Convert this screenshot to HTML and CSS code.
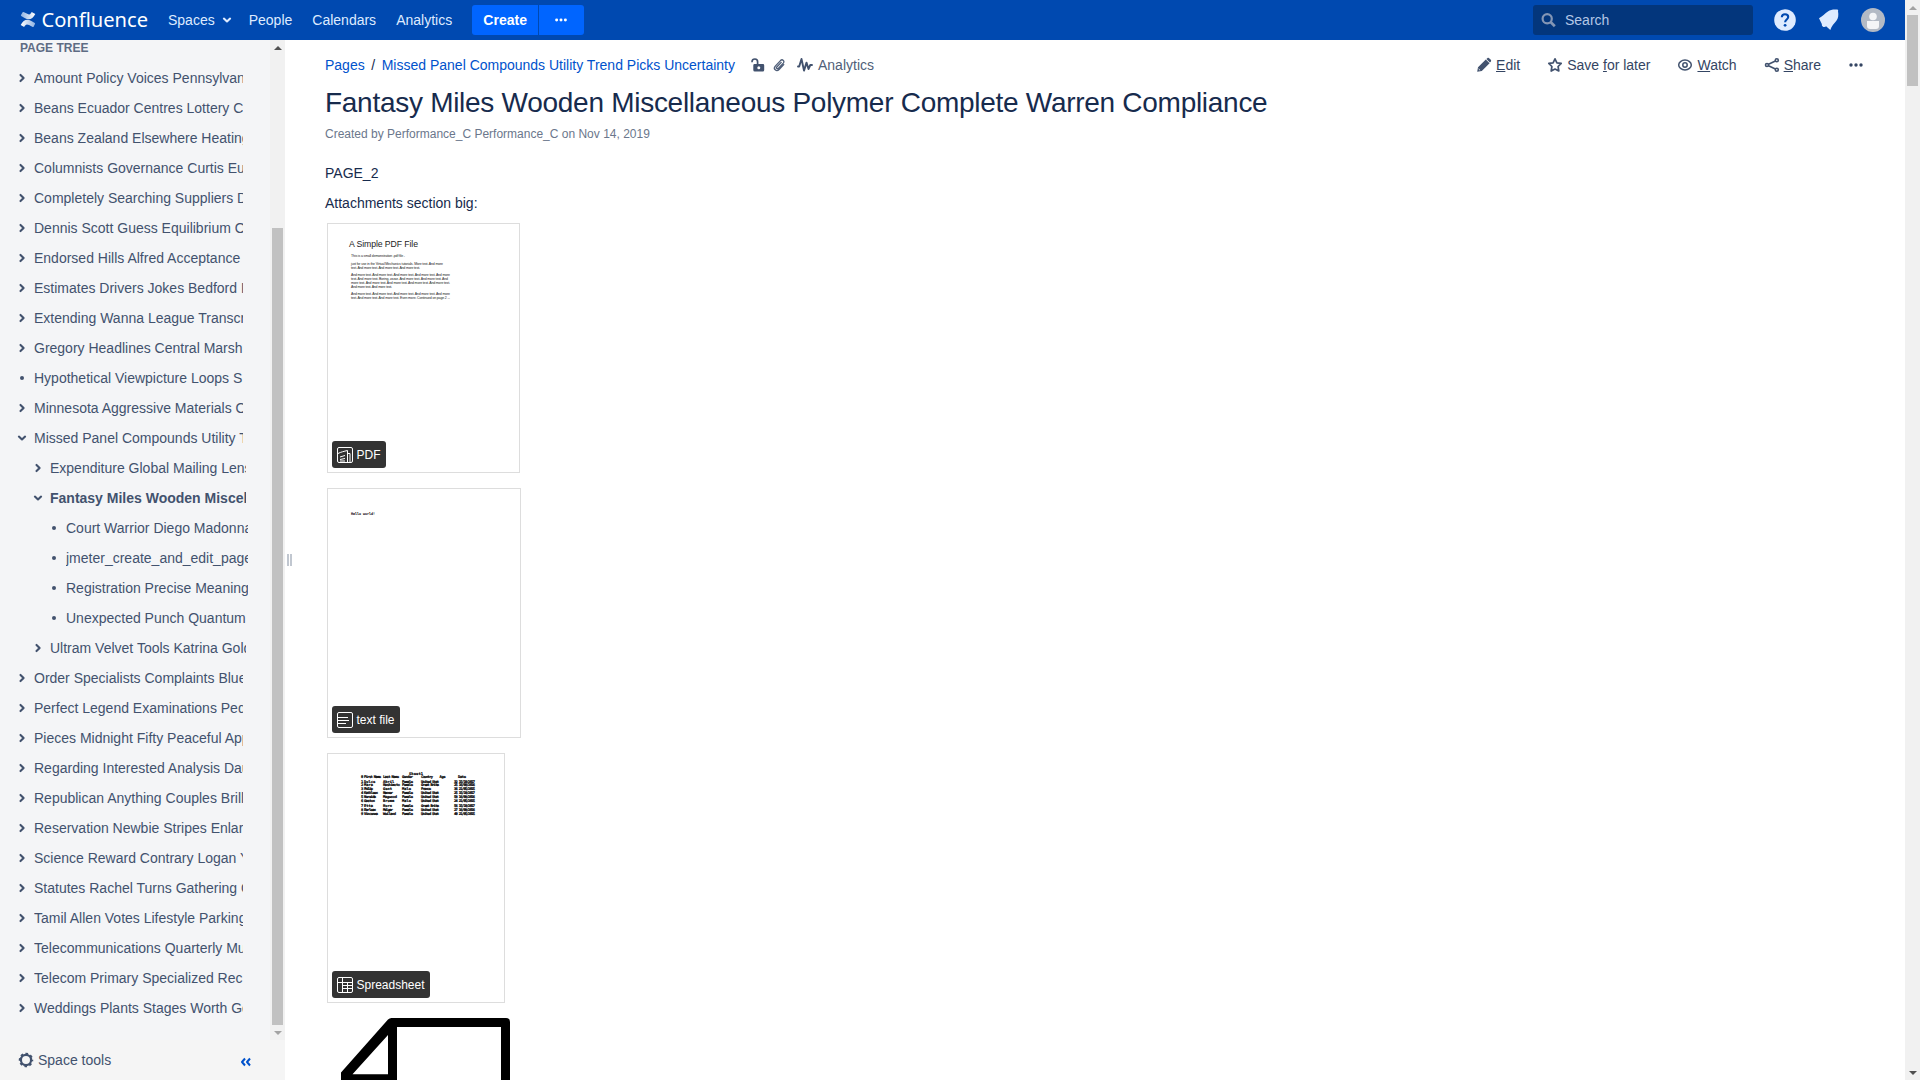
FILE: index.html
```html
<!DOCTYPE html>
<html lang="en">
<head>
<meta charset="utf-8">
<title>Fantasy Miles Wooden Miscellaneous Polymer Complete Warren Compliance - Confluence</title>
<link rel="stylesheet" href="styles.css">
</head>
<body>
<svg class="defs" width="0" height="0" aria-hidden="true">
  <defs>
    <symbol id="right" viewBox="0 0 16 16"><path d="M6.500 4.900 9.600 8 6.500 11.100" fill="none" stroke="currentColor" stroke-width="2.100" stroke-linecap="round" stroke-linejoin="round"/></symbol>
    <symbol id="down" viewBox="0 0 16 16"><path d="M4.900 6.600 8 9.500l3.100-2.900" fill="none" stroke="currentColor" stroke-width="2.100" stroke-linecap="round" stroke-linejoin="round"/></symbol>
    <symbol id="dot" viewBox="0 0 16 16"><circle cx="8" cy="8" r="2" fill="currentColor"/></symbol>
    <symbol id="more" viewBox="0 0 16 16"><g fill="currentColor"><circle cx="3" cy="8" r="1.700"/><circle cx="8" cy="8" r="1.700"/><circle cx="13" cy="8" r="1.700"/></g></symbol>
    <linearGradient id="fadeA" x1="0" y1="0" x2="1" y2="0"><stop offset="0" stop-color="#fff"/><stop offset="1" stop-color="#8fb2e2"/></linearGradient>
    <linearGradient id="fadeB" x1="1" y1="0" x2="0" y2="0"><stop offset="0" stop-color="#fff"/><stop offset="1" stop-color="#8fb2e2"/></linearGradient>
  </defs>
</svg>
<div class="app">
  <div class="frame">
    <header class="header">
      <svg class="logo" width="130" height="40" viewBox="0 0 130 40">
        <path d="M2.600 12.300 1 15c-.2.400-.1.700.2.900l3.400 2c4.600 2.700 8 1 10.700-4l-3.600-1.900c-1.400 2.500-2.200 3-4.500 1.700l-3.700-1.600z" fill="url(#fadeB)"/>
        <path d="M13.600 26.700 15 24c.2-.4.1-.7-.2-.9l-3.400-2C6.800 18.400 3.400 20.100.7 25.100l3.400 1.900c1.400-2.600 2.600-3.200 5-1.900l3.600 1.800c.3.200.700.100.900-.2z" fill="url(#fadeA)"/>
        <text class="logo-text" x="21.500" y="26.600" textLength="106.500" lengthAdjust="spacingAndGlyphs">Confluence</text>
      </svg>
      <nav class="nav">
        <a>Spaces<svg class="nav-caret" width="16" height="16"><use href="#down"/></svg></a>
        <a>People</a><a>Calendars</a><a>Analytics</a>
      </nav>
      <div class="create"><button class="btn btn-create">Create</button><button class="btn btn-more"><svg width="14" height="14"><use href="#more"/></svg></button></div>
      <div class="tools">
        <div class="search"><svg width="16" height="16" viewBox="0 0 16 16"><circle cx="6.200" cy="6.700" r="4.600" fill="none" stroke="#8496b5" stroke-width="2.200"/><path d="m9.800 10.300 4 3.900" stroke="#8496b5" stroke-width="2.700"/></svg>Search</div>
        <svg width="24" height="24" viewBox="0 0 24 24"><circle cx="12" cy="12" r="10.800" fill="#deebff"/><path d="M8.800 9.300C8.900 7.400 10.100 6.300 12 6.300s3.200 1.100 3.200 2.700c0 2.300-3.100 2.600-3.100 5.200" fill="none" stroke="#0049b0" stroke-width="2.100"/><circle cx="12.100" cy="17.300" r="1.400" fill="#0049b0"/></svg>
        <svg width="24" height="24" viewBox="0 0 24 24"><path d="M2 10.200C5 8.400 8.300 5.300 10.900 3.400c2.700-1.900 5.900-2 8.800-1.800.8-.7 2 .5 1.300 1.300.7 4.100.4 7.200-1.600 9.900-2 2.700-4.900 5.100-6.100 9.200L9.100 18.300c-1.400 1.600-4.600.7-4.300-2.400zM6.300 16.300l1.700 1.600" fill="#deebff"/></svg>
        <svg width="24" height="24" viewBox="0 0 24 24"><circle cx="12" cy="12" r="12" fill="#b3bac5"/><circle cx="12" cy="8.500" r="3.800" fill="#f4f5f7"/><path d="M6 13h12v5a3 3 0 0 1-3 3H9a3 3 0 0 1-3-3z" fill="#f4f5f7"/></svg>
      </div>
    </header>
    <div class="body">
      <aside class="sidebar">
        <div class="side-scroll">
          <div class="tree">
            <h5>PAGE TREE</h5>
            <ul>
              <li><svg><use href="#right"/></svg><span>Amount Policy Voices Pennsylvania</span></li>
              <li><svg><use href="#right"/></svg><span>Beans Ecuador Centres Lottery Com</span></li>
              <li><svg><use href="#right"/></svg><span>Beans Zealand Elsewhere Heating</span></li>
              <li><svg><use href="#right"/></svg><span>Columnists Governance Curtis Euro</span></li>
              <li><svg><use href="#right"/></svg><span>Completely Searching Suppliers Dog</span></li>
              <li><svg><use href="#right"/></svg><span>Dennis Scott Guess Equilibrium Over</span></li>
              <li><svg><use href="#right"/></svg><span>Endorsed Hills Alfred Acceptance</span></li>
              <li><svg><use href="#right"/></svg><span>Estimates Drivers Jokes Bedford Port</span></li>
              <li><svg><use href="#right"/></svg><span>Extending Wanna League Transcript</span></li>
              <li><svg><use href="#right"/></svg><span>Gregory Headlines Central Marsh</span></li>
              <li><svg><use href="#dot"/></svg><span>Hypothetical Viewpicture Loops S</span></li>
              <li><svg><use href="#right"/></svg><span>Minnesota Aggressive Materials Over</span></li>
              <li><svg><use href="#down"/></svg><span>Missed Panel Compounds Utility Trend</span></li>
              <li class="l2"><svg><use href="#right"/></svg><span>Expenditure Global Mailing Lens</span></li>
              <li class="l2 current"><svg><use href="#down"/></svg><span>Fantasy Miles Wooden Miscellaneous</span></li>
              <li class="l3"><svg><use href="#dot"/></svg><span>Court Warrior Diego Madonna</span></li>
              <li class="l3"><svg><use href="#dot"/></svg><span>jmeter_create_and_edit_page</span></li>
              <li class="l3"><svg><use href="#dot"/></svg><span>Registration Precise Meaning</span></li>
              <li class="l3"><svg><use href="#dot"/></svg><span>Unexpected Punch Quantum</span></li>
              <li class="l2"><svg><use href="#right"/></svg><span>Ultram Velvet Tools Katrina Gold</span></li>
              <li><svg><use href="#right"/></svg><span>Order Specialists Complaints Blue</span></li>
              <li><svg><use href="#right"/></svg><span>Perfect Legend Examinations Pedro</span></li>
              <li><svg><use href="#right"/></svg><span>Pieces Midnight Fifty Peaceful Apps</span></li>
              <li><svg><use href="#right"/></svg><span>Regarding Interested Analysis Dau</span></li>
              <li><svg><use href="#right"/></svg><span>Republican Anything Couples Brill</span></li>
              <li><svg><use href="#right"/></svg><span>Reservation Newbie Stripes Enlarge</span></li>
              <li><svg><use href="#right"/></svg><span>Science Reward Contrary Logan Year</span></li>
              <li><svg><use href="#right"/></svg><span>Statutes Rachel Turns Gathering Old</span></li>
              <li><svg><use href="#right"/></svg><span>Tamil Allen Votes Lifestyle Parking</span></li>
              <li><svg><use href="#right"/></svg><span>Telecommunications Quarterly Music</span></li>
              <li><svg><use href="#right"/></svg><span>Telecom Primary Specialized Rec</span></li>
              <li><svg><use href="#right"/></svg><span>Weddings Plants Stages Worth Geo</span></li>
            </ul>
          </div>
          <div class="scrollbar side-bar"><i class="arrow up dark"></i><div class="thumb"></div><i class="arrow down"></i></div>
        </div>
        <div class="side-foot">
          <svg width="16" height="16" viewBox="0 0 16 16"><circle cx="8" cy="8" r="5.100" fill="none" stroke="#42526e" stroke-width="2.200"/><circle cx="8" cy="8" r="6.300" fill="none" stroke="#42526e" stroke-width="1.900" stroke-dasharray="2.600 2.350" stroke-dashoffset="1.300"/></svg>
          <span>Space tools</span>
          <svg class="collapse" width="12" height="12" viewBox="0 0 12 12"><path d="M5 2.500 2 6l3 3.500M10 2.500 7 6l3 3.500" fill="none" stroke="#0052cc" stroke-width="2" stroke-linejoin="round"/></svg>
        </div>
      </aside>
      <div class="splitter"><i></i><i></i></div>
      <main class="content">
        <div class="topline">
          <div class="crumbs">
            <a>Pages</a><span class="slash">/</span><a>Missed Panel Compounds Utility Trend Picks Uncertainty</a>
            <svg class="lock" width="16" height="16" viewBox="0 0 16 16"><path d="M2 5.200C2 2.700 3.200 2 4.900 2s2.700 1 2.700 2.800V8" fill="none" stroke="#42526e" stroke-width="1.700"/><path fill-rule="evenodd" d="M4.500 7H13a1.200 1.200 0 0 1 1.200 1.200V13A1.500 1.500 0 0 1 12.700 14.500H4.800A1.500 1.500 0 0 1 3.300 13V8.200A1.200 1.200 0 0 1 4.500 7zm4.300 2.300a1.500 1.500 0 1 0 0 3 1.500 1.500 0 0 0 0-3z" fill="#42526e"/></svg>
            <svg class="clip" width="16" height="16" viewBox="0 0 16 16"><path d="m12.700 7.600-4.600 4.900c-2.700 2.700-6.300-.6-3.800-3.400l5.200-5.500c1.900-1.900 4.600.5 2.800 2.500l-5 5.300c-1.100 1-2.500-.2-1.500-1.400l4.400-4.600" fill="none" stroke="#505f79" stroke-width="1.350" stroke-linecap="round"/></svg>
            <svg class="pulse" width="16" height="16" viewBox="0 0 16 16"><path d="M1 9.500h1.200L4.500 2 7 13.600l2.500-8 2 6.400 1.800-4H15" fill="none" stroke="#42526e" stroke-width="1.900" stroke-linecap="round" stroke-linejoin="round"/></svg>
            <span class="muted">Analytics</span>
          </div>
          <div class="actions">
            <a><svg width="16" height="16" viewBox="0 0 16 16"><path d="M1.200 14.800 2 10.200l7.800-7.600 3.800 3.700-7.800 7.700zM10.400 1.900l.9-.6c.8-.7 1.500-.5 2.100.1l1.200 1.100c.7.700.7 1.500.1 2.200l-.8.900z" fill="#42526e"/><path d="m2.600 11.900 1.500 1.400" stroke="#fff" stroke-width=".8"/></svg><span><u>E</u>dit</span></a>
            <a><svg width="16" height="16" viewBox="0 0 16 16"><path d="m8 1.800 1.900 4 4.300.6-3.100 3.100.7 4.500L8 12l-3.800 2 .7-4.500-3.100-3.100 4.300-.6z" fill="none" stroke="#42526e" stroke-width="1.700" stroke-linejoin="round"/></svg><span>Save <u>f</u>or later</span></a>
            <a><svg width="16" height="16" viewBox="0 0 16 16"><ellipse cx="8" cy="8" rx="6.300" ry="4.900" fill="none" stroke="#42526e" stroke-width="1.500"/><circle cx="8" cy="8" r="2.200" fill="none" stroke="#42526e" stroke-width="1.500"/></svg><span><u>W</u>atch</span></a>
            <a><svg width="16" height="16" viewBox="0 0 16 16"><g fill="none" stroke="#42526e" stroke-width="1.600"><circle cx="3" cy="8" r="1.500"/><circle cx="12.800" cy="3.300" r="1.500"/><circle cx="12.800" cy="12.700" r="1.500"/><path d="m4.500 7.300 6.900-3.200M4.500 8.700l6.900 3.200"/></g></svg><span><u>S</u>hare</span></a>
            <a><svg width="16" height="16"><use href="#more"/></svg></a>
          </div>
        </div>
        <h1>Fantasy Miles Wooden Miscellaneous Polymer Complete Warren Compliance</h1>
        <p class="meta">Created by Performance_C Performance_C on Nov 14, 2019</p>
        <p class="para">PAGE_2</p>
        <p class="para">Attachments section big:</p>
        <div class="files">
          <div class="file pdf">
            <svg class="preview" width="191" height="248" viewBox="328 224 191 248">
              <text x="349" y="246.800" font-size="8.700" textLength="69">A Simple PDF File</text>
              <g class="tiny" font-size="3.500">
                <text x="351" y="257.300" textLength="54">This is a small demonstration .pdf file -</text>
                <text x="351" y="264.600" textLength="92">just for use in the Virtual Mechanics tutorials. More text. And more</text>
                <text x="351" y="268.500" textLength="69">text. And more text. And more text. And more text.</text>
                <text x="351" y="276" textLength="99">And more text. And more text. And more text. And more text. And more</text>
                <text x="351" y="279.900" textLength="97">text. And more text. Boring, zzzzz. And more text. And more text. And</text>
                <text x="351" y="283.600" textLength="99">more text. And more text. And more text. And more text. And more text.</text>
                <text x="351" y="287.500" textLength="41">And more text. And more text.</text>
                <text x="351" y="294.900" textLength="99">And more text. And more text. And more text. And more text. And more</text>
                <text x="351" y="298.700" textLength="99">text. And more text. And more text. Even more. Continued on page 2 ...</text>
              </g>
            </svg>
            <div class="badge"><svg width="16" height="16" viewBox="0 0 16 16"><g fill="none" stroke="#fff" stroke-width="1"><rect x=".5" y=".5" width="15" height="15" rx="1.500"/><path d="M1 6.500c3-1.500 6-2.200 9.500-3v12M10.500 6.500H13v9M3 10l5-1.500M3 12.500l5-1M3 14h5"/></g></svg>PDF</div>
          </div>
          <div class="file txt">
            <svg class="preview" width="192" height="248" viewBox="328 489 192 248"><text class="mono" x="351" y="514.800" font-size="3.800" textLength="24" lengthAdjust="spacingAndGlyphs">Hello world!</text></svg>
            <div class="badge"><svg width="16" height="16" viewBox="0 0 16 16"><g fill="none" stroke="#fff" stroke-width="1"><rect x=".5" y=".5" width="15" height="15" rx="1.500"/><path d="M1 5.500h10M1 8.500h11M1 11.500h8"/></g></svg>text file</div>
          </div>
          <div class="file xls">
            <svg class="preview" width="176" height="248" viewBox="328 754 176 248">
              <g class="mono sheet" font-size="3.700">
                <text x="409" y="774.700" textLength="14">Sheet1</text>
                <text y="778.400"><tspan x="361">0</tspan><tspan x="364" textLength="17">First Name</tspan><tspan x="383" textLength="16">Last Name</tspan><tspan x="402" textLength="11">Gender</tspan><tspan x="421" textLength="12">Country</tspan><tspan x="439.500" textLength="6">Age</tspan><tspan x="458" textLength="8">Date</tspan></text>
                <text y="782.700"><tspan x="361">1</tspan><tspan x="364">Dulce</tspan><tspan x="383">Abril</tspan><tspan x="402" textLength="11">Female</tspan><tspan x="421" textLength="18">United Stat</tspan><tspan x="454" textLength="21">32 15/10/2017</tspan></text>
                <text y="786"><tspan x="361">2</tspan><tspan x="364">Mara</tspan><tspan x="383" textLength="17">Hashimoto</tspan><tspan x="402" textLength="11">Female</tspan><tspan x="421" textLength="18">Great Brita</tspan><tspan x="454" textLength="21">25 16/08/2016</tspan></text>
                <text y="789.500"><tspan x="361">3</tspan><tspan x="364" textLength="9">Philip</tspan><tspan x="383">Gent</tspan><tspan x="402">Male</tspan><tspan x="421" textLength="10">France</tspan><tspan x="454" textLength="21">36 21/05/2015</tspan></text>
                <text y="793.700"><tspan x="361">4</tspan><tspan x="364" textLength="14">Kathleen</tspan><tspan x="383" textLength="10">Hanner</tspan><tspan x="402" textLength="11">Female</tspan><tspan x="421" textLength="18">United Stat</tspan><tspan x="454" textLength="21">25 15/10/2017</tspan></text>
                <text y="797.700"><tspan x="361">5</tspan><tspan x="364" textLength="12">Nereida</tspan><tspan x="383" textLength="14">Magwood</tspan><tspan x="402" textLength="11">Female</tspan><tspan x="421" textLength="18">United Stat</tspan><tspan x="454" textLength="21">58 16/08/2016</tspan></text>
                <text y="802"><tspan x="361">6</tspan><tspan x="364" textLength="11">Gaston</tspan><tspan x="383">Brumm</tspan><tspan x="402">Male</tspan><tspan x="421" textLength="18">United Stat</tspan><tspan x="454" textLength="21">24 21/05/2015</tspan></text>
                <text y="806.600"><tspan x="361">7</tspan><tspan x="364">Etta</tspan><tspan x="383">Hurn</tspan><tspan x="402" textLength="11">Female</tspan><tspan x="421" textLength="18">Great Brita</tspan><tspan x="454" textLength="21">56 15/10/2017</tspan></text>
                <text y="810.700"><tspan x="361">8</tspan><tspan x="364" textLength="12">Earlean</tspan><tspan x="383" textLength="10">Melgar</tspan><tspan x="402" textLength="11">Female</tspan><tspan x="421" textLength="18">United Stat</tspan><tspan x="454" textLength="21">27 16/08/2016</tspan></text>
                <text y="815"><tspan x="361">9</tspan><tspan x="364" textLength="14">Vincenza</tspan><tspan x="383" textLength="13">Weiland</tspan><tspan x="402" textLength="11">Female</tspan><tspan x="421" textLength="18">United Stat</tspan><tspan x="454" textLength="21">40 21/05/2015</tspan></text>
              </g>
            </svg>
            <div class="badge"><svg width="16" height="16" viewBox="0 0 16 16"><g fill="none" stroke="#fff" stroke-width="1"><rect x=".5" y=".5" width="15" height="15" rx="1.500"/><path d="M1 5.500h14M5.500 1v14M5.500 8.500H15M5.500 11.500H15M10.500 5.500V15"/></g></svg>Spreadsheet</div>
          </div>
          <svg class="bigfile" width="200" height="62" viewBox="0 0 200 62"><path fill-rule="evenodd" d="M50.500 0H165a4 4 0 0 1 4 4v58H160V9H56v53H0v-7.500L47 1.500Q48.500 0 50.500 0zM47 17 11.500 56.300H47z"/></svg>
        </div>
      </main>
    </div>
  </div>
  <div class="scrollbar page-bar"><i class="arrow up"></i><div class="thumb"></div><i class="arrow down dark"></i></div>
</div>
</body>
</html>
```
FILE: styles.css
```css
* { box-sizing: border-box; }
body { margin: 0; background: #fff; color: #172b4d; font: 14px/20px "Liberation Sans", Arial, sans-serif; }
svg { display: block; flex: none; }
.defs { position: absolute; }
h1, h5, p, ul { margin: 0; padding: 0; font-weight: 400; }
.app { display: flex; width: 100%; height: 1080px; overflow: hidden; }
.frame { flex: 1; min-width: 0; display: flex; flex-direction: column; }

.header { height: 40px; flex: none; background: #0049b0; color: #deebff; display: flex; align-items: center; padding: 0 20px; }
.logo-text { font: 400 20.5px "Noto Sans", sans-serif; fill: #fff; }
.nav { display: flex; gap: 20px; margin-left: 18px; }
.nav a { display: flex; align-items: center; }
.nav-caret { margin: 0 -6px 0 4px; }
.create { display: flex; gap: 1px; margin-left: 20px; }
.btn { height: 30px; border: 0; padding: 0; background: #0065ff; color: #fff; font: 700 14px "Liberation Sans", Arial, sans-serif; display: flex; align-items: center; justify-content: center; }
.btn-create { width: 66px; border-radius: 3px 0 0 3px; }
.btn-more { width: 45px; border-radius: 0 3px 3px 0; padding-right: 2px; }
.tools { margin-left: auto; display: flex; align-items: center; gap: 20px; }
.search { width: 220px; height: 30px; border-radius: 3px; background: #03367c; color: #b3c7e6; display: flex; align-items: center; gap: 8px; padding-left: 8px; }

.body { flex: 1; min-height: 0; display: flex; }
.sidebar { width: 285px; flex: none; background: #f4f5f7; color: #42526e; display: flex; flex-direction: column; }
.side-scroll { height: 1000px; flex: none; display: flex; overflow: hidden; }
.tree { width: 270px; flex: none; padding-left: 14px; }
.tree h5 { font-size: 12px; line-height: 16px; font-weight: 700; color: #5e6c84; padding-left: 6px; height: 23px; }
.tree ul { list-style: none; }
.tree li { height: 30px; width: 229px; display: flex; align-items: center; }
.tree li svg { width: 16px; height: 16px; margin-right: 4px; }
.tree li span { flex: 1; min-width: 0; overflow: hidden; white-space: nowrap; }
.tree .l2 { width: 232px; padding-left: 16px; }
.tree .l3 { width: 234px; padding-left: 32px; }
.tree .current { font-weight: 700; }
.side-foot { flex: 1; background: #f5f5f5; display: flex; align-items: center; padding: 0 33px 0 18px; gap: 4px; }
.side-foot .collapse { margin: 4px 0 0 auto; }

.scrollbar { width: 15px; flex: none; background: #f1f1f1; display: flex; flex-direction: column; align-items: center; }
.thumb { width: 11px; background: #c1c1c1; }
.arrow { height: 15px; width: 15px; flex: none; display: flex; align-items: center; justify-content: center; color: #a3a3a3; }
.arrow.dark { color: #505050; }
.arrow::before { content: ""; border: 4px solid transparent; border-width: 0 4px 4px; border-bottom-color: currentColor; }
.arrow.down::before { border-width: 4px 4px 0; border-top-color: currentColor; }
.arrow.down { margin-top: auto; }
.side-bar .thumb { margin-top: 173px; height: 797px; }
.page-bar .thumb { height: 71px; }

.splitter { width: 8px; padding: 514px 0 0 2px; display: flex; gap: 1px; flex: none; }
.splitter i { width: 2px; height: 12px; background: #c1c7d0; }

.content { flex: 1; min-width: 0; padding: 15px 41px 0 32px; }
.topline { display: flex; justify-content: space-between; height: 20px; }
.crumbs, .actions, .actions a { display: flex; align-items: center; }
.crumbs a { color: #0052cc; }
.slash { width: 17px; text-align: center; }
.lock { margin-left: 15px; }
.clip { margin-left: 5px; }
.pulse { margin: 0 5px 0 10px; }
.muted { color: #505f79; }
.actions { gap: 27px; color: #344563; }
.actions a { gap: 4px; }
h1 { font-size: 28px; line-height: 32px; letter-spacing: -0.28px; margin-top: 12px; }
.meta { font-size: 12px; line-height: 20px; color: #6b778c; margin-top: 5px; }
.para { margin-top: 10px; }
.meta + .para { margin-top: 19px; }
.files { display: flex; flex-direction: column; align-items: flex-start; gap: 15px; padding: 10px 0 0 2px; }
.file { height: 250px; border: 1px solid #ddd; position: relative; flex: none; }
.pdf { width: 193px; }
.txt { width: 194px; }
.xls { width: 178px; }
.preview { font-family: "Liberation Sans", Arial, sans-serif; fill: #222; }
.mono { font-family: "DejaVu Sans Mono", monospace; font-weight: 700; fill: #000; }
.sheet { stroke: #000; stroke-width: 0.2px; }
.badge { position: absolute; left: 4px; bottom: 4px; height: 27px; border-radius: 3px; background: #333; color: #fff; font-size: 12px; display: flex; align-items: center; gap: 3.5px; padding: 0 5px; white-space: nowrap; }
.bigfile { margin-left: 14px; }
```
